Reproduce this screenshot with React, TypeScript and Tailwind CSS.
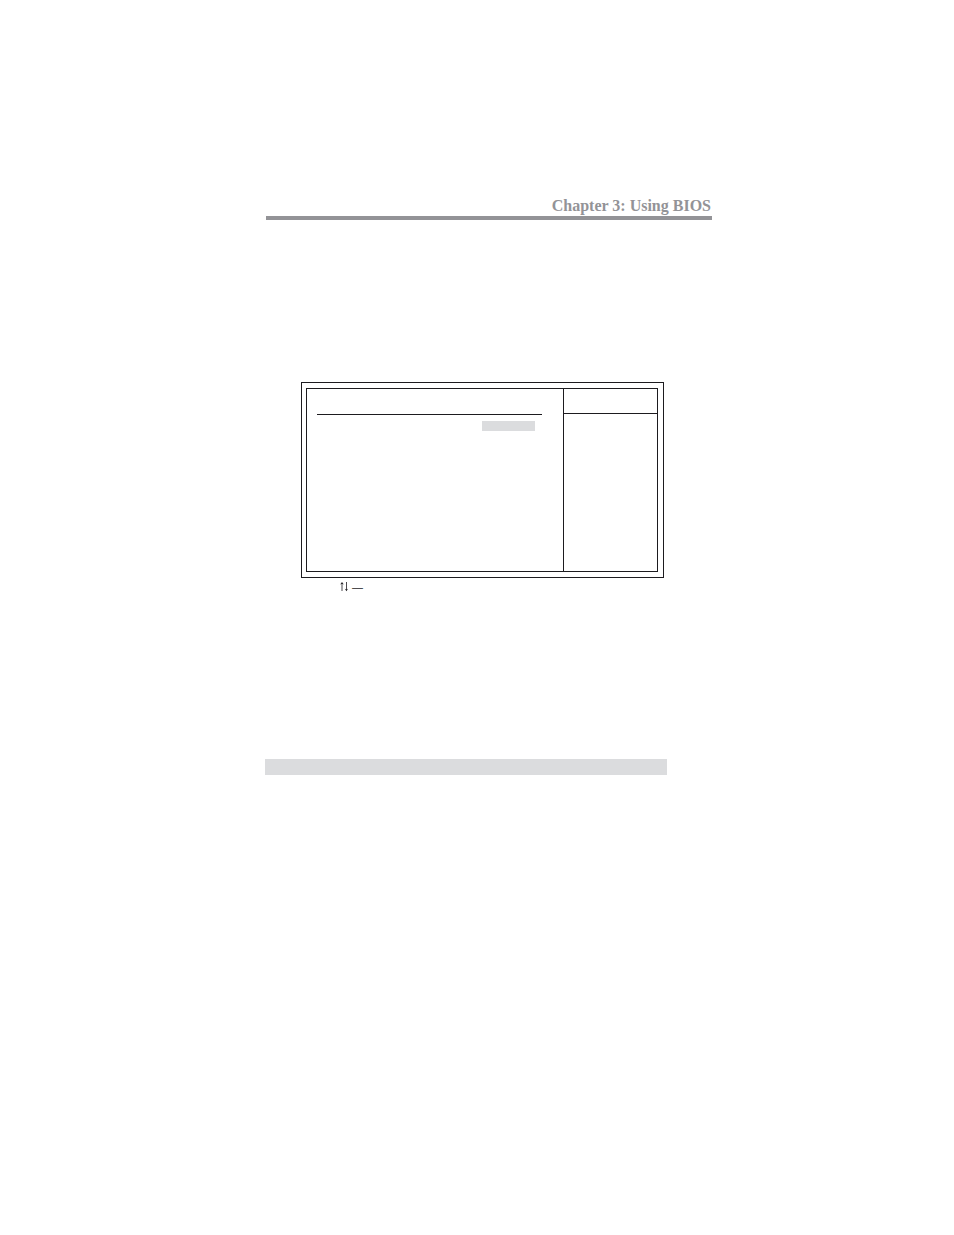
function ChapterHeader() {
  return (
    <header className="ml-px border-b-4 border-[#939397] pr-px text-right">
      <h1 className="font-['Palatino_Linotype','Book_Antiqua',Palatino,'Liberation_Serif',serif] text-base leading-5 font-bold text-[#939397]">
        Chapter 3: Using BIOS
      </h1>
    </header>
  );
}

function SetupScreen() {
  return (
    <section className="border border-[#1d1b1f] py-[5px] pr-[5px] pl-1">
      <div className="grid h-46 grid-cols-[256fr_94fr] border border-[#1d1b1f]">
        <div className="pr-[21px] pl-[10px]">
          <div className="h-[26px] border-b border-[#1d1b1f]" />
          <div className="mt-[6px] mr-[7px] ml-auto h-[10px] w-[53px] bg-[#dbdcde]" />
        </div>
        <aside className="border-l border-[#1d1b1f]">
          <div className="h-[25px] border-b border-[#1d1b1f]" />
        </aside>
      </div>
    </section>
  );
}

function UpDownKeys() {
  return (
    <svg className="h-[10px] w-2" viewBox="0 0 8 10" fill="none" stroke="#1d1b1f" role="img" aria-label="Up and down keys">
      <path d="M2 1V9M6.5 0V8" strokeWidth="0.8" />
      <path d="M0.2 2.4L2 0L3.8 2.4L2 1.8ZM4.8 6.8L6.5 9.2L8 6.8L6.5 7.4Z" fill="#1d1b1f" stroke="none" />
    </svg>
  );
}

export default function App() {
  return (
    <div className="min-h-screen bg-white">
      <main className="grid grid-cols-[265fr_447fr_242fr] pt-[196px]">
        <div className="col-start-2">
          <ChapterHeader />
          <div className="mt-[162px] mr-12 ml-9">
            <SetupScreen />
            <p className="ml-[39px] flex h-[18px] items-center gap-1 font-['Liberation_Sans',sans-serif] text-[11px] leading-4 text-[#1d1b1f]">
              <UpDownKeys />
              <span>—</span>
            </p>
          </div>
          <div className="mt-[163px] mr-[45px] h-4 bg-[#dbdcde]" />
        </div>
      </main>
    </div>
  );
}
